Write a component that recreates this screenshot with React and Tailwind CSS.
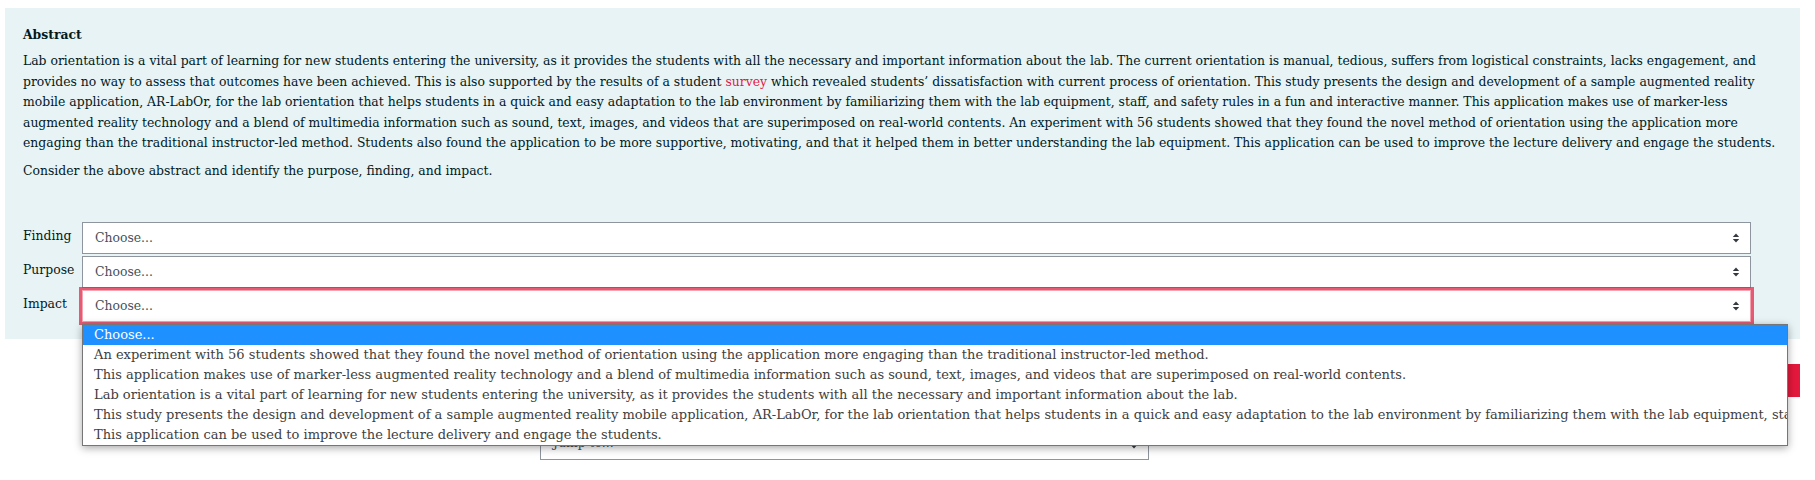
const abstractLines = [
  'Lab orientation is a vital part of learning for new students entering the university, as it provides the students with all the necessary and important information about the lab. The current orientation is manual, tedious, suffers from logistical constraints, lacks engagement, and',
  null,
  'mobile application, AR-LabOr, for the lab orientation that helps students in a quick and easy adaptation to the lab environment by familiarizing them with the lab equipment, staff, and safety rules in a fun and interactive manner. This application makes use of marker-less',
  'augmented reality technology and a blend of multimedia information such as sound, text, images, and videos that are superimposed on real-world contents. An experiment with 56 students showed that they found the novel method of orientation using the application more',
  'engaging than the traditional instructor-led method. Students also found the application to be more supportive, motivating, and that it helped them in better understanding the lab equipment. This application can be used to improve the lecture delivery and engage the students.',
]

const options = [
  'An experiment with 56 students showed that they found the novel method of orientation using the application more engaging than the traditional instructor-led method.',
  'This application makes use of marker-less augmented reality technology and a blend of multimedia information such as sound, text, images, and videos that are superimposed on real-world contents.',
  'Lab orientation is a vital part of learning for new students entering the university, as it provides the students with all the necessary and important information about the lab.',
  'This study presents the design and development of a sample augmented reality mobile application, AR-LabOr, for the lab orientation that helps students in a quick and easy adaptation to the lab environment by familiarizing them with the lab equipment, staff, and safety rules in a fun and interactive manner.',
  'This application can be used to improve the lecture delivery and engage the students.',
]

// Up/down caret shown at the right of a custom-select
function SelectArrows() {
  return (
    <svg width="8" height="12" viewBox="0 0 8 12" className="shrink-0">
      <path d="M4 1.5 L7.2 5 H0.8 Z" fill="#343a40" />
      <path d="M4 10.5 L0.8 7 H7.2 Z" fill="#343a40" />
    </svg>
  )
}

function ChoiceRow({ label, focused }) {
  return (
    <div className="flex items-start">
      <span className="w-[59px] pt-[4px] leading-[20px] text-[#001a1e]">{label}</span>
      <div
        className={`w-[1669px] h-[32px] bg-white flex items-center justify-between pl-[12px] pr-[10px] border ${
          focused
            ? 'border-[#f4a3b0] shadow-[0_0_0_3px_rgba(230,30,65,0.72)]'
            : 'border-[#8f959e]'
        }`}
      >
        <span className="text-[#495057]">Choose...</span>
        <SelectArrows />
      </div>
    </div>
  )
}

export default function App() {
  return (
    <div className="relative w-[1815px] h-[480px] bg-white overflow-hidden font-['DejaVu_Serif',serif] text-[12.4px] text-[#001a1e]">
      <div className="pt-[8px] pl-[5px] w-[1800px]">
        <div className="bg-[#e7f3f5] pt-[17px] pb-[17px] pl-[18px] pr-[18px]">
          <p className="font-bold leading-[20.5px]">Abstract</p>
          <p className="mt-[5.5px] leading-[20.5px] whitespace-nowrap">
            {abstractLines[0]}
            <br />
            provides no way to assess that outcomes have been achieved. This is also supported by the results of a student{' '}
            <a className="text-[#e5173f]">survey</a> which revealed students’ dissatisfaction with current process of orientation. This study presents the design and development of a sample augmented reality
            <br />
            {abstractLines[2]}
            <br />
            {abstractLines[3]}
            <br />
            {abstractLines[4]}
          </p>
          <p className="mt-[7px] leading-[20.5px]">
            Consider the above abstract and identify the purpose, finding, and impact.
          </p>

          <div className="mt-[41px] flex flex-col gap-[2px]">
            <ChoiceRow label="Finding" />
            <ChoiceRow label="Purpose" />
            <ChoiceRow label="Impact" focused />
          </div>
        </div>
      </div>

      {/* Page navigation under the question, mostly covered by the open list */}
      <div className="w-[1800px] mt-[25px] flex justify-end">
        <div className="w-[140px] h-[33px] bg-[#e4183c]" />
      </div>
      <div className="mt-[30px] ml-[540px] w-[609px] h-[33px] border border-[#8f959e] bg-white flex items-center justify-between pl-[12px] pr-[10px]">
        <span className="text-[#495057]">Jump to...</span>
        <SelectArrows />
      </div>

      {/* Open option list of the Impact select */}
      <div className="absolute left-[82px] top-[324px] w-[1706px] bg-white border border-[#767676] shadow-[0_2px_8px_rgba(0,0,0,0.35)] text-[13px] text-[#404040]">
        <div className="h-[20px] leading-[20px] pl-[11px] bg-[#1e90ff] text-white">Choose...</div>
        {options.map((o, i) => (
          <div key={i} className="h-[20px] leading-[20px] pl-[11px] whitespace-nowrap overflow-hidden">
            {o}
          </div>
        ))}
      </div>
    </div>
  )
}
